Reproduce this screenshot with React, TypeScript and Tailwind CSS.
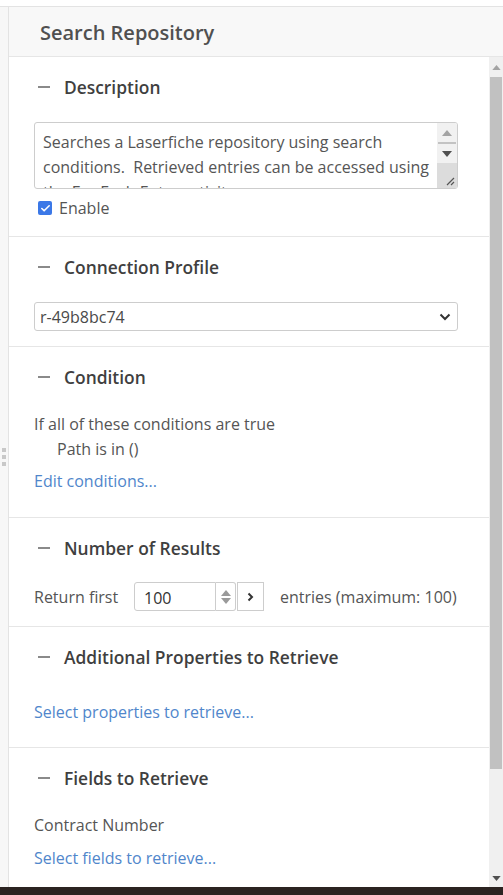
import { Check } from 'lucide-react'

function Minus() {
  return <span className="mr-[14px] ml-[4px] block h-[2px] w-[12px] bg-[#8a8a8a]" />
}

function Section({ title, children, className }: { title: string; children: React.ReactNode; className?: string }) {
  return (
    <section className={`border-b border-[#e6e6e6] pl-[25px] pr-[31px] pt-[18px] ${className ?? ''}`}>
      <h2 className="flex h-[24px] items-center text-[17.4px] font-semibold text-[#3f3f3f]">
        <Minus />
        {title}
      </h2>
      {children}
    </section>
  )
}

function Caret({ dir, className }: { dir: 'up' | 'down'; className?: string }) {
  return (
    <svg width="10" height="6" viewBox="0 0 10 6" className={className}>
      {dir === 'up' ? <path d="M0 6 L5 0 L10 6 Z" fill="currentColor" /> : <path d="M0 0 L10 0 L5 6 Z" fill="currentColor" />}
    </svg>
  )
}

export default function App() {
  return (
    <div className="flex h-[895px] flex-col bg-white text-[16px] text-[#555]" style={{ fontFamily: '"Open Sans", "Noto Sans", sans-serif' }}>
      <div className="h-[6px] bg-white" />
      <div className="flex min-h-0 flex-1 border-t border-[#e3e3e3]">
        {/* splitter grip */}
        <div className="flex w-[9px] flex-col items-center justify-center gap-[3px] border-r border-[#e3e3e3] bg-[#f7f7f7] pt-[20px]">
          <span className="h-[4px] w-[4px] bg-[#c8c8c8]" />
          <span className="h-[4px] w-[4px] bg-[#c8c8c8]" />
          <span className="h-[4px] w-[4px] bg-[#c8c8c8]" />
        </div>

        <div className="flex min-w-0 flex-1 flex-col">
          <header className="flex h-[50px] shrink-0 items-center border-b border-[#e6e6e6] bg-[#f8f8f8] pl-[31px] pt-[3px]">
            <h1 className="text-[20px] font-semibold text-[#505050]">Search Repository</h1>
          </header>

          <div className="flex h-[830px] shrink-0">
            <div className="min-w-0 flex-1 overflow-hidden">
              <Section title="Description" className="pb-[18px]">
                <div className="mt-[23px] flex h-[67px] overflow-hidden rounded-[3px] border border-[#cdcdcd]">
                  <p className="flex-1 px-[8px] pt-[7px] leading-[25px]">
                    Searches a Laserfiche repository using search conditions.&nbsp; Retrieved entries can be accessed using the For Each Entry activity.
                  </p>
                  <div className="flex w-[20px] flex-col bg-[#f1f1f1]">
                    <div className="flex h-[19px] items-center justify-center text-[#a3a3a3]">
                      <Caret dir="up" />
                    </div>
                    <div className="mx-[1px] h-[2px] bg-[#c3c3c3]" />
                    <div className="flex h-[19px] items-center justify-center text-[#505050]">
                      <Caret dir="down" />
                    </div>
                    <div className="flex flex-1 items-end justify-end bg-[#dcdcdc] p-[2px]">
                      <svg width="9" height="9" viewBox="0 0 9 9">
                        <path d="M1 8 L8 1 M5 8 L8 5" stroke="#555" strokeWidth="1.2" />
                      </svg>
                    </div>
                  </div>
                </div>
                <label className="mt-[9px] flex h-[20px] items-center">
                  <span className="ml-[4px] mr-[7px] flex h-[14px] w-[14px] items-center justify-center rounded-[2px] bg-[#3b78e7]">
                    <Check size={11} strokeWidth={3.5} color="white" />
                  </span>
                  Enable
                </label>
              </Section>

              <Section title="Connection Profile" className="pb-[15px]">
                <div className="mt-[23px] flex h-[29px] items-center justify-between rounded-[3px] border border-[#cdcdcd] pl-[5px] pr-[6px] text-[#4a4a4a]">
                  <span>r-49b8bc74</span>
                  <svg width="12" height="8" viewBox="0 0 12 8">
                    <path d="M1.5 1.5 L6 6 L10.5 1.5" fill="none" stroke="#333" strokeWidth="2" />
                  </svg>
                </div>
              </Section>

              <Section title="Condition" className="pb-[24px]">
                <div className="mt-[23px] leading-[25px]">
                  <p>If all of these conditions are true</p>
                  <p className="pl-[23px]">Path is in ()</p>
                </div>
                <a className="mt-[7px] block leading-[24px] text-[#5086cb]">Edit conditions...</a>
              </Section>

              <Section title="Number of Results" className="pb-[15px]">
                <div className="mt-[22px] flex h-[29px] items-center">
                  <span className="w-[100px] shrink-0">Return first</span>
                  <div className="flex h-full shrink-0">
                    <div className="flex w-[82px] items-center rounded-l-[3px] border border-[#cdcdcd] pl-[9px] pt-[2px] text-[#333]">100</div>
                    <div className="flex w-[20px] flex-col items-center justify-center gap-[2px] rounded-r-[3px] border border-l-0 border-[#cdcdcd] text-[#9a9a9a]">
                      <Caret dir="up" />
                      <Caret dir="down" />
                    </div>
                    <div className="ml-[1px] flex w-[27px] items-center justify-center border border-[#cdcdcd]">
                      <svg width="7" height="10" viewBox="0 0 7 10">
                        <path d="M1.5 1.5 L5 5 L1.5 8.5" fill="none" stroke="#333" strokeWidth="2" />
                      </svg>
                    </div>
                  </div>
                  <span className="ml-[16px] whitespace-nowrap">entries (maximum: 100)</span>
                </div>
              </Section>

              <Section title="Additional Properties to Retrieve" className="pb-[23px]">
                <a className="mt-[31px] block leading-[24px] text-[#5086cb]">Select properties to retrieve...</a>
              </Section>

              <Section title="Fields to Retrieve" className="border-b-0">
                <p className="mt-[23px] leading-[24px]">Contract Number</p>
                <a className="mt-[9px] block leading-[24px] text-[#5086cb]">Select fields to retrieve...</a>
              </Section>
            </div>

            {/* scrollbar */}
            <div className="flex w-[14px] flex-col bg-[#f0f0f0]">
              <div className="flex h-[20px] items-center justify-center text-[#a3a3a3]">
                <Caret dir="up" className="h-[5px] w-[9px]" />
              </div>
              <div className="mx-[1px] h-[692px] bg-[#c1c1c1]" />
              <div className="flex-1" />
              <div className="flex h-[17px] items-center justify-center text-[#505050]">
                <Caret dir="down" className="h-[5px] w-[9px]" />
              </div>
            </div>
          </div>
        </div>
      </div>
      <div className="h-[8px] shrink-0 bg-[#2b2321]" />
    </div>
  )
}
